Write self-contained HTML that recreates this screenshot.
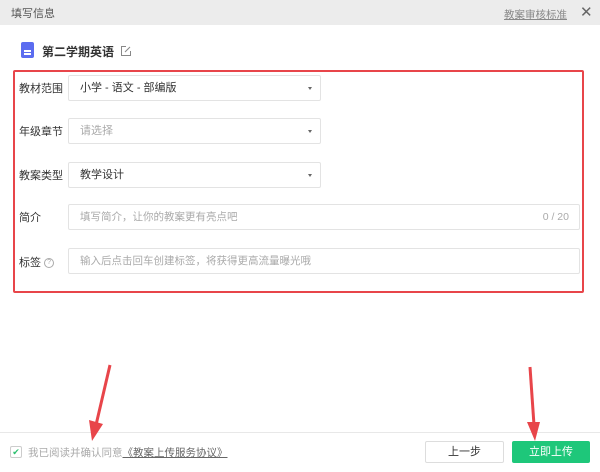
<!DOCTYPE html>
<html><head><meta charset="utf-8"><style>
*{box-sizing:border-box;margin:0;padding:0}
body{width:600px;height:472px;background:#fff;font-family:"Liberation Sans","Noto Sans CJK SC",sans-serif;font-size:11px;color:#333;position:relative;overflow:hidden}
.hdr{position:absolute;left:0;top:0;width:600px;height:25px;background:#ececec;}
.abs{position:absolute}
.box{position:absolute;border:1px solid #e3e3e3;border-radius:2px;background:#fff;height:26px;line-height:24px;padding-left:11px}
.lbl{position:absolute;left:19px;font-size:11px;color:#333}
.caret{position:absolute;right:8px;top:11px;width:0;height:0;border-left:2.5px solid transparent;border-right:2.5px solid transparent;border-top:3px solid #666}
.ph{color:#aaa}
</style></head><body>
<div class="hdr"></div>
<div class="abs" style="left:11px;top:5px;color:#555;font-size:11px">填写信息</div>
<div class="abs" style="left:504px;top:7px;color:#888;font-size:10.5px;text-decoration:underline">教案审核标准</div>
<div class="abs" style="left:580px;top:3px;color:#666;font-size:15px">✕</div>

<div class="abs" style="left:21px;top:42px;width:13px;height:16px;background:#5b6cf0;border-radius:2px"><div style="position:absolute;left:3px;top:8px;width:7px;height:1.5px;background:#fff"></div><div style="position:absolute;left:3px;top:11px;width:7px;height:1.5px;background:#fff"></div></div>
<div class="abs" style="left:42px;top:43px;font-size:12px;font-weight:bold;color:#333">第二学期英语</div>
<svg class="abs" style="left:120px;top:45px" width="12" height="12"><path d="M6 1.5H1.5V10.5H10.5V6" fill="none" stroke="#888"/><path d="M5 7L10 2" stroke="#888"/></svg>

<div class="abs" style="left:13px;top:70px;width:571px;height:223px;border:2px solid #e8454a;border-radius:2px"></div>

<div class="lbl" style="top:80px">教材范围</div>
<div class="box" style="left:68px;top:75px;width:253px">小学 - 语文 - 部编版<div class="caret"></div></div>
<div class="lbl" style="top:123px">年级章节</div>
<div class="box" style="left:68px;top:118px;width:253px"><span class="ph">请选择</span><div class="caret"></div></div>
<div class="lbl" style="top:167px">教案类型</div>
<div class="box" style="left:68px;top:162px;width:253px">教学设计<div class="caret"></div></div>
<div class="lbl" style="top:209px">简介</div>
<div class="box" style="left:68px;top:204px;width:512px;font-size:10.5px"><span class="ph">填写简介，让你的教案更有亮点吧</span><span class="ph" style="position:absolute;right:10px">0 / 20</span></div>
<div class="lbl" style="top:254px">标签 <span style="display:inline-block;width:10px;height:10px;border:1px solid #aaa;border-radius:50%;font-size:7px;line-height:8px;text-align:center;color:#aaa;vertical-align:middle">?</span></div>
<div class="box" style="left:68px;top:248px;width:512px;font-size:10.5px"><span class="ph">输入后点击回车创建标签，将获得更高流量曝光哦</span></div>

<div class="abs" style="left:0;top:432px;width:600px;height:1px;background:#e8e8e8"></div>
<div class="abs" style="left:10px;top:446px;width:12px;height:12px;border:1px solid #ccc;border-radius:2px;color:#2bbf6e;font-size:9px;line-height:10px;text-align:center">✔</div>
<div class="abs" style="left:28px;top:445px;color:#aaa;font-size:10.5px">我已阅读并确认同意<span style="color:#666;text-decoration:underline">《教案上传服务协议》</span></div>
<div class="abs" style="left:425px;top:441px;width:79px;height:22px;border:1px solid #ddd;border-radius:2px;text-align:center;line-height:20px;color:#333">上一步</div>
<div class="abs" style="left:512px;top:441px;width:78px;height:22px;background:#1ec77a;border-radius:2px;text-align:center;line-height:22px;color:#fff">立即上传</div>

<svg class="abs" style="left:0;top:0" width="600" height="472">
<path d="M110 365 L96 425" stroke="#e8454a" stroke-width="3"/>
<path d="M89 420 L92 441 L103 424 Z" fill="#e8454a"/>
<path d="M530 367 L534 425" stroke="#e8454a" stroke-width="3"/>
<path d="M527 422 L535 441 L540 422 Z" fill="#e8454a"/>
</svg>
</body></html>
